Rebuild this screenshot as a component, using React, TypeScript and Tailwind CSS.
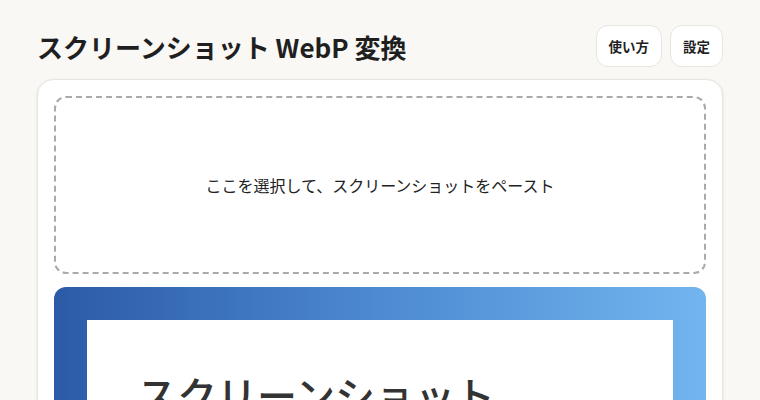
export default function App() {
  return (
    <div
      className="min-h-screen bg-[#f9f8f5] px-[37px] pt-[25px] text-[#1f1f1f]"
      style={{ fontFamily: '"Noto Sans CJK JP", "Noto Sans", sans-serif' }}
    >
      <header className="flex h-[42px] items-center justify-between">
        <h1 className="text-[26px] font-bold">スクリーンショット WebP 変換</h1>
        <div className="flex gap-2">
          <button className="h-[42px] rounded-xl border border-[#e9e5df] bg-white px-3 text-[13.5px] font-bold">
            使い方
          </button>
          <button className="h-[42px] rounded-xl border border-[#e9e5df] bg-white px-3 text-[13.5px] font-bold">
            設定
          </button>
        </div>
      </header>

      <main className="mt-3 rounded-2xl border border-[#e9e5df] bg-white p-4 shadow-sm">
        <div className="flex h-[178px] items-center justify-center rounded-xl border-2 border-dashed border-[#aaaaaa] text-base text-[#222]">
          ここを選択して、スクリーンショットをペースト
        </div>

        <div className="mt-[13px] rounded-xl bg-gradient-to-r from-[#2c5aa7] via-[#4d8ad1] to-[#72b5ef] px-[33px] pt-[33px]">
          <div className="h-[200px] bg-white px-[50px] pt-[54px]">
            <p className="text-[40px] font-medium leading-none text-[#333]">スクリーンショット</p>
          </div>
        </div>
      </main>
    </div>
  );
}
